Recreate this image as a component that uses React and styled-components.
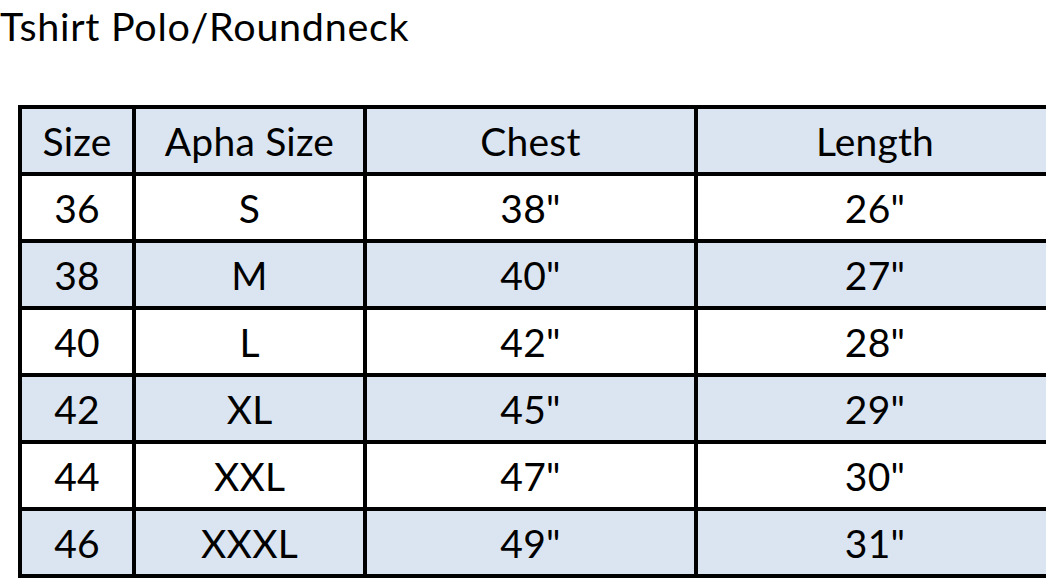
import React from "react"
import styled, { createGlobalStyle } from "styled-components"

const GlobalStyle = createGlobalStyle`
  html, body {
    margin: 0;
    padding: 0;
    background: #ffffff;
    overflow: hidden;
  }
  body {
    width: 1046px;
    height: 582px;
    font-family: Lato, "Liberation Sans", sans-serif;
    color: #000000;
  }
`

const Page = styled.div`
  display: flex;
  flex-direction: column;
  padding: 4px 0 0 0;
`

const Title = styled.h1`
  margin: 0;
  font-weight: 400;
  font-size: 39.5px;
  line-height: 44px;
  letter-spacing: 0.7px;
`

const Grid = styled.div`
  display: grid;
  grid-template-columns: 110px 227px 327px 354px;
  grid-auto-rows: 63px;
  gap: 4px;
  padding: 4px;
  margin: 57px 0 0 18px;
  width: max-content;
  background: #000000;
`

const Cell = styled.div`
  display: flex;
  align-items: center;
  justify-content: center;
  background: ${({ $shaded }) => ($shaded ? "#dbe5f1" : "#ffffff")};
  font-size: 39px;
  letter-spacing: 0.2px;
`

const columns = ["Size", "Apha Size", "Chest", "Length"]

const rows = [
  ["36", "S", '38"', '26"'],
  ["38", "M", '40"', '27"'],
  ["40", "L", '42"', '28"'],
  ["42", "XL", '45"', '29"'],
  ["44", "XXL", '47"', '30"'],
  ["46", "XXXL", '49"', '31"'],
]

export default function App() {
  return (
    <Page>
      <GlobalStyle />
      <Title>Tshirt Polo/Roundneck</Title>
      <Grid>
        {columns.map((c) => (
          <Cell key={c} $shaded>
            {c}
          </Cell>
        ))}
        {rows.map((row, i) =>
          row.map((value, j) => (
            <Cell key={`${i}-${j}`} $shaded={i % 2 === 1}>
              {value}
            </Cell>
          ))
        )}
      </Grid>
    </Page>
  )
}
